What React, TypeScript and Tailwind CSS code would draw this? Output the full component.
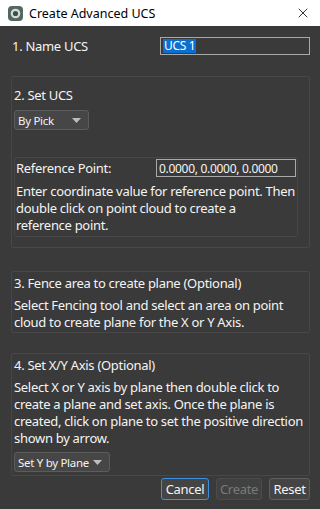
import { X } from 'lucide-react';

function Caret() {
  return (
    <svg width="9" height="5" viewBox="0 0 9 5" className="shrink-0">
      <path d="M0 0 L9 0 L4.5 5 Z" fill="#bdbdbd" />
    </svg>
  );
}

function Combo({ label, width }: { label: string; width: string }) {
  return (
    <div
      className={`${width} h-[20px] flex items-center justify-between pl-[3px] pr-[7px] rounded-[3px] border border-[#5c5c5c] bg-[#464646] text-[11.5px] text-[#f2f2f2] tracking-[-0.3px] whitespace-nowrap`}
    >
      <span>{label}</span>
      <Caret />
    </div>
  );
}

export default function App() {
  return (
    <div
      className="w-[320px] h-[509px] flex flex-col bg-[#3a3a3a] text-[#f4f4f4] text-[13px] leading-[17px] tracking-[-0.3px] overflow-hidden"
      style={{ fontFamily: '"Noto Sans", "Open Sans", sans-serif' }}
    >
      {/* title bar */}
      <div className="h-[26px] shrink-0 bg-white flex items-center pl-[8px] pr-[9px] text-black tracking-normal">
        <svg width="15" height="15" viewBox="0 0 15 15" className="shrink-0">
          <rect x="0" y="0" width="15" height="15" rx="4" fill="#53665f" />
          <circle cx="7.5" cy="7.5" r="4.8" fill="#d3dcd8" />
          <circle cx="7.5" cy="7.5" r="2.6" fill="#3f4f49" />
        </svg>
        <span className="ml-[6px] text-[12.5px]">Create Advanced UCS</span>
        <X size={16} strokeWidth={1.2} className="ml-auto text-black" />
      </div>

      <div className="flex flex-col pl-[11px] pr-[10px]">
        {/* 1. name */}
        <div className="mt-[11px] h-[18px] flex items-center">
          <span className="pl-[1px]">1. Name UCS</span>
          <div className="ml-auto w-[150px] h-[18px] border border-[#a8a8a8] flex items-center pl-[2px] text-[12px]">
            <span className="bg-[#0a6fd0] text-white leading-[14px] px-[1px]">UCS 1</span>
          </div>
        </div>

        {/* 2. set ucs */}
        <div className="mt-[21px] h-[172px] border border-[#474747] rounded-[2px] pl-[2px] pr-[11px] pt-[10px] flex flex-col">
          <span>2. Set UCS</span>
          <div className="mt-[6px]">
            <Combo label="By Pick" width="w-[75px]" />
          </div>
          <div className="mt-[27px] h-[80px] border border-[#474747] rounded-[2px] pl-[1px] pr-[1px] pt-[1px] flex flex-col">
            <div className="flex items-center h-[18px]">
              <span>Reference Point:</span>
              <div className="ml-auto w-[140px] h-[18px] border border-[#a8a8a8] flex items-center pl-[2px] text-[12px] tracking-[-0.3px]">
                0.0000, 0.0000, 0.0000
              </div>
            </div>
            <p className="mt-[6px]">
              Enter coordinate value for reference point. Then double click on point cloud to create a
              <br />
              reference point.
            </p>
          </div>
        </div>

        {/* 3. fence */}
        <div className="mt-[23px] h-[62px] border border-[#474747] rounded-[2px] pl-[2px] pr-[4px] pt-[3px] flex flex-col">
          <span>3. Fence area to create plane (Optional)</span>
          <p className="mt-[5px]">
            Select Fencing tool and select an area on point cloud to create plane for the X or Y Axis.
          </p>
        </div>

        {/* 4. axis */}
        <div className="mt-[20px] h-[123px] border border-[#474747] rounded-[2px] pl-[2px] pr-[1px] pt-[3px] flex flex-col">
          <span>4. Set X/Y Axis (Optional)</span>
          <p className="mt-[5px]">
            Select X or Y axis by plane then double click to create a plane and set axis. Once the plane is created, click on plane to set the positive direction shown by arrow.
          </p>
          <div className="mt-[5px]">
            <Combo label="Set Y by Plane" width="w-[96px]" />
          </div>
        </div>

        {/* buttons */}
        <div className="mt-[2px] flex justify-end gap-[7px]">
          <button className="w-[48px] h-[22px] rounded-[3px] border border-[#3d8fe0] bg-[#444444] text-[#f4f4f4]">
            Cancel
          </button>
          <button className="w-[46px] h-[22px] rounded-[3px] border border-[#4b4b4b] bg-[#414141] text-[#7a7a7a]">
            Create
          </button>
          <button className="w-[41px] h-[22px] rounded-[3px] border border-[#5e5e5e] bg-[#444444] text-[#f4f4f4]">
            Reset
          </button>
        </div>
      </div>
    </div>
  );
}
